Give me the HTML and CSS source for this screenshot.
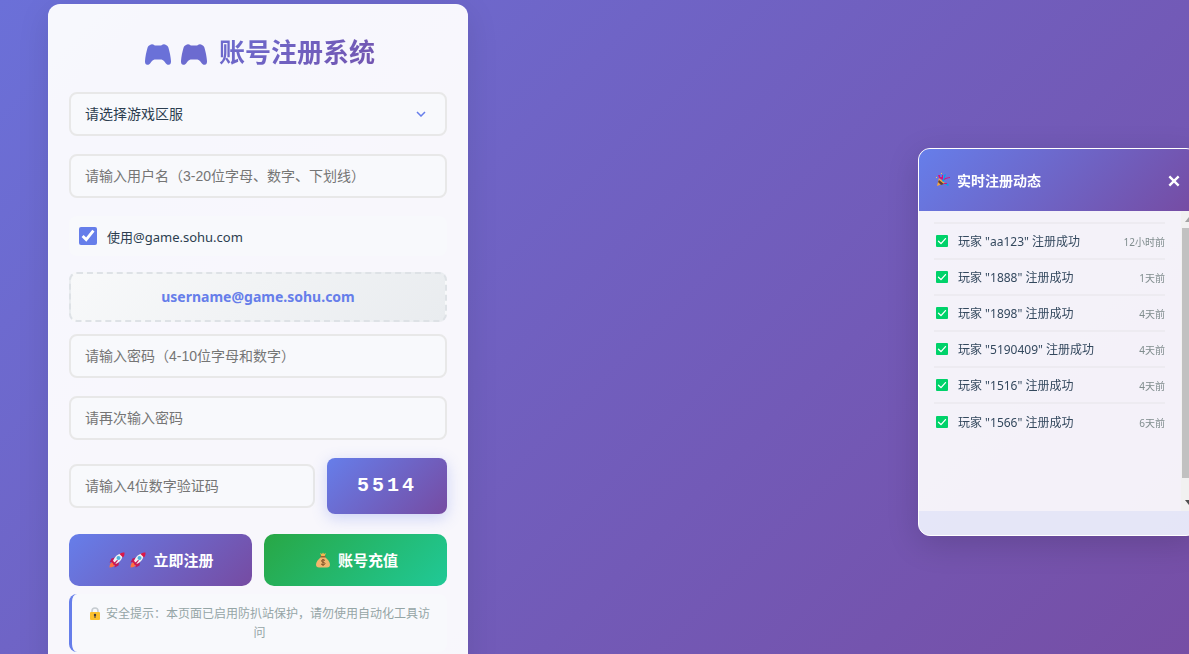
FILE: index.html
```
<!DOCTYPE html>
<html lang="zh-CN">
<head>
<meta charset="UTF-8">
<meta name="viewport" content="width=device-width, initial-scale=1">
<title>账号注册系统</title>
<link rel="stylesheet" href="styles.css">
</head>
<body>

<!-- shared icons -->
<svg class="defs" width="0" height="0" aria-hidden="true">
	<symbol id="gamepad" viewBox="0 0 26 21">
		<path d="M5 1C6 0 8 0 8.800.8 9.200 1.200 9.500 1.400 10 1.400h6c.5 0 .8-.2 1.200-.6C18 0 20 0 21 1c1.200.4 2 1.200 2.400 2.600C24.700 8 25.700 13 26 17c.1 2-.7 3.600-2.200 3.800-1.200.2-2-.4-2.900-1.400C19.500 17.800 18 15.500 16.500 15.500h-7C8 15.500 6.500 17.800 5.100 19.400c-.9 1-1.700 1.600-2.900 1.400C.7 20.600-.1 19 0 17 .3 13 1.300 8 2.600 3.600 3 2.200 3.800 1.400 5 1z"/>
	</symbol>
	<symbol id="rocket" viewBox="0 0 32 32">
		<path fill="#c2185b" d="M12 11 5 13 1 21l8-2zM20 20l-1 7-8 4 2-8z"/>
		<path fill="#ff7043" d="M7 20c-4 1-6 5-6 11 6 0 10-2 11-6z"/>
		<path fill="#f1f3f5" d="M8 18C11 9 18 3 27 3c1 9-4 17-14 21z"/>
		<path fill="#dc1747" d="M21 4c3-3 7-3 10-3 0 4 0 7-3 10zM7 17l8 8-3 2-7-7z"/>
		<circle cx="19" cy="12" r="4" fill="#4fb3dc"/>
		<path fill="#c2185b" d="m16 16 2 1-8 9-2-2z"/>
	</symbol>
	<symbol id="check" viewBox="0 0 12 12">
		<rect width="12" height="12" rx="1" fill="#00d26a"/>
		<path d="M2.500 6.200 5 8.600l4.500-5" fill="none" stroke="#fff" stroke-width="1.300" stroke-linecap="round" stroke-linejoin="round"/>
	</symbol>
</svg>

<main class="container">
	<h1 class="title">
		<svg class="pad pad-first"><use href="#gamepad"/></svg>
		<svg class="pad pad-second"><use href="#gamepad"/></svg>
		<span>账号注册系统</span>
	</h1>

	<form>
		<div class="field select-wrap">
			<select class="control" aria-label="游戏区服">
				<option>请选择游戏区服</option>
			</select>
			<svg class="chevron" viewBox="0 0 10 6"><path d="M1 1l4 4 4-4"/></svg>
		</div>
		<div class="field">
			<input class="control" type="text" aria-label="用户名" placeholder="请输入用户名（3-20位字母、数字、下划线）">
		</div>
		<div class="suffix">
			<input type="checkbox" id="useSuffix" checked>
			<label for="useSuffix">使用@game.sohu.com</label>
		</div>
		<div class="preview">username@game.sohu.com</div>
		<div class="field">
			<input class="control" type="password" aria-label="密码" placeholder="请输入密码（4-10位字母和数字）">
		</div>
		<div class="field">
			<input class="control" type="password" aria-label="确认密码" placeholder="请再次输入密码">
		</div>
		<div class="captcha-row">
			<input class="control" type="text" aria-label="验证码" placeholder="请输入4位数字验证码">
			<button class="captcha" type="button">5514</button>
		</div>
		<div class="actions">
			<button class="btn btn-register" type="button">
				<svg class="emoji"><use href="#rocket"/></svg>
				<svg class="emoji"><use href="#rocket"/></svg>
				<span>立即注册</span>
			</button>
			<button class="btn btn-pay" type="button">
				<svg class="emoji" viewBox="0 0 32 32">
					<path fill="#f7b64f" d="m10 2 4 2 2-3 2 3 4-2-3 7h-6z"/>
					<path fill="#f2b66d" d="M12 10h8c6 5 10 10 10 15 0 4-2 6-6 6H8c-4 0-6-2-6-6 0-5 4-10 10-15z"/>
					<path fill="#9a6031" d="M11 8h10v3H11z"/>
					<path d="M20 17c-2-2-7-2-7 1s7 2 7 5-5 3-8 1M16 14v14" fill="none" stroke="#805126" stroke-width="2"/>
				</svg>
				<span>账号充值</span>
			</button>
		</div>
	</form>

	<p class="tip">
		<svg class="lock" viewBox="0 0 12 14">
			<path d="M3 7V4a3 3 0 0 1 6 0v3" fill="none" stroke="#c5cbd0" stroke-width="1.500"/>
			<rect x="1" y="5" width="10" height="8" rx="1" fill="#fcc02e"/>
			<circle cx="6" cy="8" r="1.200" fill="#433b41"/>
			<path d="M5.500 8h1v3h-1z" fill="#433b41"/>
		</svg>
		安全提示：本页面已启用防扒站保护，请勿使用自动化工具访问
	</p>
</main>

<aside class="feed">
	<header class="feed-header">
		<svg class="party" viewBox="0 0 16 16">
			<path fill="#f5a742" d="M4 6 2 14l8-3z"/>
			<path fill="#624235" d="m4 8 5 4-3 1-3-3z"/>
			<path fill="#00a6ed" d="M7 8c3-2 1-4 3-6l1 1c-2 2 0 5-3 7zM12 11l2 2-1 1-3-2z"/>
			<path fill="#d4147f" d="M3 3h2v2h2V3h1v5L4 6zM9 7c2-2 3-1 6-2v1c-3 0-4 1-6 2zM9 11h3v1H9z"/>
			<path fill="#f8c84b" d="M6 1h1v1H6zM1 5h1v1H1z"/>
		</svg>
		<h2>实时注册动态</h2>
		<button class="close" type="button" aria-label="关闭">
			<svg viewBox="0 0 12 12"><path d="M2 2l8 8M10 2l-8 8"/></svg>
		</button>
	</header>
	<div class="feed-body">
		<ul class="list">
			<li><svg><use href="#check"/></svg></li>
			<li><svg><use href="#check"/></svg><span>玩家 "aa123" 注册成功</span><time>12小时前</time></li>
			<li><svg><use href="#check"/></svg><span>玩家 "1888" 注册成功</span><time>1天前</time></li>
			<li><svg><use href="#check"/></svg><span>玩家 "1898" 注册成功</span><time>4天前</time></li>
			<li><svg><use href="#check"/></svg><span>玩家 "5190409" 注册成功</span><time>4天前</time></li>
			<li><svg><use href="#check"/></svg><span>玩家 "1516" 注册成功</span><time>4天前</time></li>
			<li><svg><use href="#check"/></svg><span>玩家 "1566" 注册成功</span><time>6天前</time></li>
		</ul>
		<div class="scrollbar">
			<span class="arrow arrow-up"></span>
			<span class="thumb"></span>
			<span class="arrow arrow-down"></span>
		</div>
	</div>
	<footer class="feed-footer"></footer>
</aside>

</body>
</html>
```

FILE: styles.css
```
* {
	box-sizing: border-box;
	margin: 0;
	padding: 0;
}
body {
	height: 100vh;
	overflow: hidden;
	padding: 4px 48px;
	background: linear-gradient(135deg, #6b70d8 0%, #764ea5 100%);
	font-family: "Noto Sans", "Noto Sans CJK SC", sans-serif;
	font-size: 14px;
	color: #2c3e50;
}
.defs {
	position: absolute;
}
button, input, select {
	font-family: "Liberation Sans", "Noto Sans CJK SC", sans-serif;
}
button {
	border: none;
	color: #fff;
	cursor: pointer;
}

/* register card */
.container {
	max-width: 420px;
	padding: 20px;
	border: 1px solid rgba(255, 255, 255, 0.2);
	border-radius: 12px;
	background: rgba(255, 255, 255, 0.95);
	box-shadow: 0 8px 32px rgba(0, 0, 0, 0.1);
}
.title {
	display: flex;
	align-items: center;
	justify-content: center;
	height: 54px;
	margin-bottom: 13px;
	padding-left: 4px;
	font-size: 26px;
	line-height: 54px;
	background: linear-gradient(135deg, #667eea, #764ba2);
	-webkit-background-clip: text;
	background-clip: text;
	color: transparent;
}
.pad {
	width: 26px;
	height: 21px;
	margin-top: 4px;
}
.pad-first {
	margin-right: 10px;
	fill: #6a71d8;
}
.pad-second {
	margin-right: 12px;
	fill: #6c6bd0;
}
.field {
	margin-bottom: 18px;
}
.control {
	display: block;
	width: 100%;
	height: 44px;
	padding: 0 14px;
	border: 2px solid #e8e8e8;
	border-radius: 8px;
	outline: none;
	background: #f8f9fc;
	font-size: 14px;
	color: #2c3e50;
}
.control::placeholder {
	color: #757575;
}
.select-wrap {
	position: relative;
}
select.control {
	appearance: none;
}
.chevron {
	position: absolute;
	top: 19px;
	right: 21px;
	width: 10px;
	height: 6px;
	fill: none;
	stroke: #667eea;
	stroke-width: 1.5;
}
.suffix {
	display: flex;
	align-items: center;
	gap: 10px;
	height: 40px;
	margin-bottom: 16px;
	padding: 0 10px;
	border-radius: 8px;
	background: #f8f9fc;
	font-size: 13px;
}
.suffix input {
	width: 18px;
	height: 18px;
	accent-color: #667eea;
}
.preview {
	height: 50px;
	margin-bottom: 12px;
	border: 2px dashed #dee2e6;
	border-radius: 8px;
	background: linear-gradient(135deg, #f8f9fa, #e9ecef);
	font-weight: bold;
	line-height: 46px;
	text-align: center;
	color: #667eea;
}
.captcha-row {
	display: flex;
	align-items: center;
	gap: 12px;
	margin-bottom: 20px;
}
.captcha-row .control {
	flex: 1;
	min-width: 0;
}
.captcha {
	width: 120px;
	height: 56px;
	padding-bottom: 2px;
	border-radius: 8px;
	background: linear-gradient(135deg, #667eea, #764ba2);
	box-shadow: 0 4px 15px rgba(102, 126, 234, 0.3);
	font-family: "Liberation Mono", monospace;
	font-size: 20px;
	font-weight: bold;
	letter-spacing: 3px;
}
.actions {
	display: grid;
	grid-template-columns: 1fr 1fr;
	gap: 12px;
	margin-bottom: 8px;
}
.btn {
	display: flex;
	align-items: center;
	justify-content: center;
	gap: 5px;
	height: 52px;
	padding: 0 0 2px 2px;
	border-radius: 10px;
	font-size: 15px;
	font-weight: bold;
}
.btn-register {
	background: linear-gradient(135deg, #667eea, #764ba2);
}
.btn-pay {
	background: linear-gradient(135deg, #28a745, #20c997);
}
.emoji {
	width: 16px;
	height: 16px;
	margin-top: 2px;
}
.btn span {
	margin-left: 2px;
}
.tip {
	padding: 10px 15px;
	border-left: 3px solid #667eea;
	border-radius: 8px;
	background: #f8f9fc;
	font-size: 12px;
	line-height: 19px;
	text-align: center;
	color: #95a5a6;
}
.lock {
	width: 12px;
	height: 14px;
	margin-right: 2px;
	vertical-align: -3px;
}

/* live feed, runs a little past the right edge of the window */
.feed {
	position: fixed;
	top: 148px;
	right: -9px;
	width: 280px;
	overflow: hidden;
	border: 1px solid #fff;
	border-radius: 12px;
	background: rgba(255, 255, 255, 0.92);
	box-shadow: 0 8px 32px rgba(0, 0, 0, 0.15);
}
.feed-header {
	display: flex;
	align-items: center;
	height: 62px;
	padding: 0 16px;
	background: linear-gradient(135deg, #667eea, #764ba2);
	color: #fff;
}
.feed-header h2 {
	flex: 1;
	margin-left: 6px;
	font-size: 14px;
}
.party {
	width: 16px;
	height: 16px;
}
.close {
	width: 14px;
	height: 14px;
	margin-top: 2px;
	background: none;
}
.close svg {
	display: block;
	width: 14px;
	height: 14px;
	fill: none;
	stroke: #fff;
	stroke-width: 2;
}
.feed-body {
	display: flex;
	height: 300px;
	overflow: hidden;
}
.list {
	flex: 1;
	margin-top: -23px;
	padding: 0 16px 0 15px;
	list-style: none;
}
.list li {
	display: flex;
	align-items: center;
	height: 36px;
	border-bottom: 2px solid #edebf1;
	font-size: 12px;
	color: #34495e;
}
.list li:last-child {
	border-bottom: none;
}
.list svg {
	width: 12px;
	height: 12px;
	margin: 0 10px 0 2px;
}
.list span {
	flex: 1;
}
.list time {
	font-size: 10px;
	color: #7f8c8d;
}
.scrollbar {
	display: flex;
	flex-direction: column;
	align-items: center;
	justify-content: space-between;
	width: 16px;
	padding: 6px 0;
	background: #f1f1f1;
}
.thumb {
	width: 14px;
	height: 250px;
	margin: 6px 0 auto;
	background: #c1c1c1;
}
.arrow {
	border: 4px solid transparent;
}
.arrow-up {
	border-top: none;
	border-bottom: 5px solid #a3a3a3;
}
.arrow-down {
	border-bottom: none;
	border-top: 5px solid #505050;
}
.feed-footer {
	height: 24px;
	background: rgba(102, 126, 234, 0.1);
}
```
